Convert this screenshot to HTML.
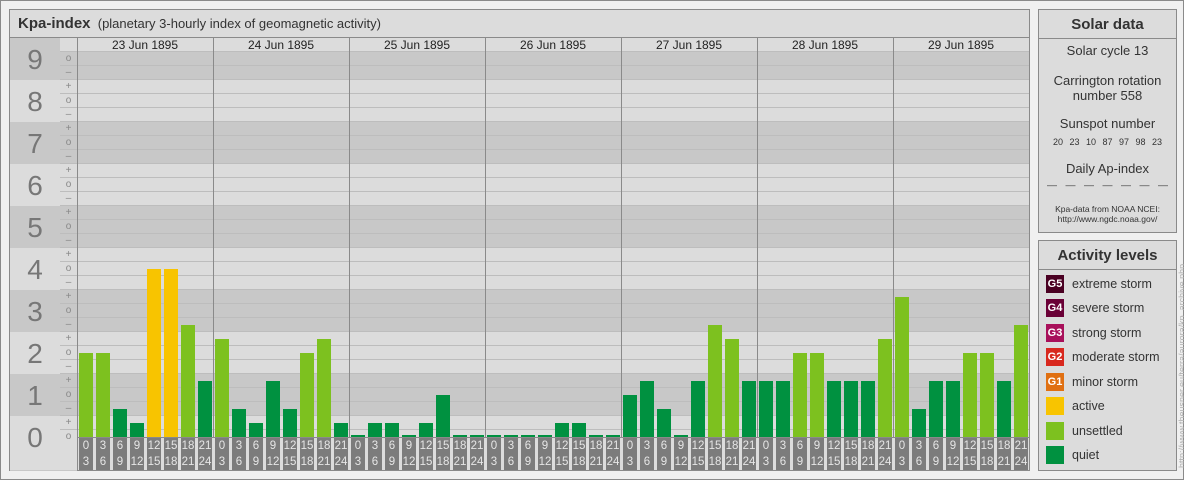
<!DOCTYPE html><html><head><meta charset="utf-8"><style>
*{margin:0;padding:0;box-sizing:border-box}
body{width:1184px;height:480px;background:#f0f0f0;font-family:"Liberation Sans",sans-serif;position:relative;overflow:hidden}
.a{position:absolute}
#frame{left:0;top:0;width:1184px;height:480px;border:1px solid #8a8a8a}
#main{left:9px;top:9px;width:1021px;height:462px;border:1px solid #8a8a8a;background:#dcdcdc}
#title{left:9px;top:9px;width:1021px;height:29px;border:1px solid #8a8a8a;background:#dcdcdc;font-size:13px;color:#333;padding:5px 0 0 8px}
#title b{font-size:15px;color:#333}
#dig{left:9px;top:38px;width:52px;height:433px;border-left:1px solid #8a8a8a;border-right:1px solid #8a8a8a;background:repeating-linear-gradient(#c8c8c8 0 42px,#dcdcdc 42px 84px)}
#dig div{position:absolute;left:0;width:50px;text-align:center;font-size:28px;color:#777;height:42px;line-height:44px}
#sub{left:60px;top:38px;width:18px;height:433px;border-right:1px solid #8a8a8a;background:repeating-linear-gradient(transparent 0 13px,#bdbdbd 13px 14px),repeating-linear-gradient(#c8c8c8 0 42px,#dcdcdc 42px 84px)}
#sub div{position:absolute;left:0;width:17px;text-align:center;font-size:10px;color:#888;height:14px;line-height:13px}
#chart{left:77px;top:38px;width:952px;height:400px;border-bottom:1px solid #8a8a8a;background:repeating-linear-gradient(transparent 0 13px,#bdbdbd 13px 14px),repeating-linear-gradient(#c8c8c8 0 42px,#dcdcdc 42px 84px)}
.hd{position:absolute;top:0;height:14px;width:136px;background:#dcdcdc;text-align:center;font-size:12px;line-height:14px;color:#222;border-bottom:1px solid #bdbdbd}
.dv{position:absolute;top:0;width:1px;height:400px;background:#8a8a8a}
#chart i{position:absolute;bottom:0;width:14px;background:#009140}
#chart i.u{background:#7dc11f}#chart i.y{background:#f8c400}
#lab div{position:absolute;top:0;width:14px;height:32px;background:#7c7c7c;color:#e6e6e6;font-size:11.5px;line-height:16px;text-align:center}
.box{border:1px solid #8a8a8a;background:#dcdcdc}
.bt{border-bottom:1px solid #8a8a8a;text-align:center;font-weight:bold;font-size:15px;color:#333;height:29px;line-height:29px}
.t{position:absolute;left:0;width:137px;text-align:center;font-size:13px;color:#333}
.sq{position:absolute;left:7px;width:18px;height:18px;color:#fff;font-size:11px;font-weight:bold;line-height:18px;text-align:center}
.lt{position:absolute;left:33px;font-size:12.5px;color:#333;line-height:18px}
</style></head><body>
<div class="a" id="frame"></div>
<div class="a" id="main"></div>
<div class="a" id="title"><b>Kpa-index</b>&nbsp; (planetary 3-hourly index of geomagnetic activity)</div>
<div class="a" id="dig">
<div style="top:378px;height:54px;background:#dcdcdc"></div>
<div style="top:0">9</div><div style="top:42px">8</div><div style="top:84px">7</div><div style="top:126px">6</div><div style="top:168px">5</div><div style="top:210px">4</div><div style="top:252px">3</div><div style="top:294px">2</div><div style="top:336px">1</div><div style="top:378px">0</div>
</div>
<div class="a" id="sub">
<div style="top:0;height:13px;background:#dcdcdc"></div>
<div style="top:392px;height:40px;background:#dcdcdc"></div>
<div style="top:14px">o</div><div style="top:28px">–</div>
<div style="top:42px">+</div><div style="top:56px">o</div><div style="top:70px">–</div>
<div style="top:84px">+</div><div style="top:98px">o</div><div style="top:112px">–</div>
<div style="top:126px">+</div><div style="top:140px">o</div><div style="top:154px">–</div>
<div style="top:168px">+</div><div style="top:182px">o</div><div style="top:196px">–</div>
<div style="top:210px">+</div><div style="top:224px">o</div><div style="top:238px">–</div>
<div style="top:252px">+</div><div style="top:266px">o</div><div style="top:280px">–</div>
<div style="top:294px">+</div><div style="top:308px">o</div><div style="top:322px">–</div>
<div style="top:336px">+</div><div style="top:350px">o</div><div style="top:364px">–</div>
<div style="top:378px">+</div><div style="top:392px">o</div>
</div>
<div class="a" id="chart">
<div class="hd" style="left:0">23 Jun 1895</div><div class="hd" style="left:136px">24 Jun 1895</div><div class="hd" style="left:272px">25 Jun 1895</div><div class="hd" style="left:408px">26 Jun 1895</div><div class="hd" style="left:544px">27 Jun 1895</div><div class="hd" style="left:680px">28 Jun 1895</div><div class="hd" style="left:816px">29 Jun 1895</div>
<div class="dv" style="left:0"></div><div class="dv" style="left:136px"></div><div class="dv" style="left:272px"></div><div class="dv" style="left:408px"></div><div class="dv" style="left:544px"></div><div class="dv" style="left:680px"></div><div class="dv" style="left:816px"></div>
<i class="u" style="left:2px;height:84px"></i><i class="u" style="left:19px;height:84px"></i><i style="left:36px;height:28px"></i><i style="left:53px;height:14px"></i><i class="y" style="left:70px;height:168px"></i><i class="y" style="left:87px;height:168px"></i><i class="u" style="left:104px;height:112px"></i><i style="left:121px;height:56px"></i>
<i class="u" style="left:138px;height:98px"></i><i style="left:155px;height:28px"></i><i style="left:172px;height:14px"></i><i style="left:189px;height:56px"></i><i style="left:206px;height:28px"></i><i class="u" style="left:223px;height:84px"></i><i class="u" style="left:240px;height:98px"></i><i style="left:257px;height:14px"></i>
<i style="left:274px;height:2px"></i><i style="left:291px;height:14px"></i><i style="left:308px;height:14px"></i><i style="left:325px;height:2px"></i><i style="left:342px;height:14px"></i><i style="left:359px;height:42px"></i><i style="left:376px;height:2px"></i><i style="left:393px;height:2px"></i>
<i style="left:410px;height:2px"></i><i style="left:427px;height:2px"></i><i style="left:444px;height:2px"></i><i style="left:461px;height:2px"></i><i style="left:478px;height:14px"></i><i style="left:495px;height:14px"></i><i style="left:512px;height:2px"></i><i style="left:529px;height:2px"></i>
<i style="left:546px;height:42px"></i><i style="left:563px;height:56px"></i><i style="left:580px;height:28px"></i><i style="left:597px;height:2px"></i><i style="left:614px;height:56px"></i><i class="u" style="left:631px;height:112px"></i><i class="u" style="left:648px;height:98px"></i><i style="left:665px;height:56px"></i>
<i style="left:682px;height:56px"></i><i style="left:699px;height:56px"></i><i class="u" style="left:716px;height:84px"></i><i class="u" style="left:733px;height:84px"></i><i style="left:750px;height:56px"></i><i style="left:767px;height:56px"></i><i style="left:784px;height:56px"></i><i class="u" style="left:801px;height:98px"></i>
<i class="u" style="left:818px;height:140px"></i><i style="left:835px;height:28px"></i><i style="left:852px;height:56px"></i><i style="left:869px;height:56px"></i><i class="u" style="left:886px;height:84px"></i><i class="u" style="left:903px;height:84px"></i><i style="left:920px;height:56px"></i><i class="u" style="left:937px;height:112px"></i>
</div>
<div class="a" style="left:77px;top:437px;width:1px;height:33px;background:#8a8a8a"></div>
<div class="a" id="lab" style="left:77px;top:438px;width:952px;height:32px">
<div style="left:2px">0<br>3</div><div style="left:19px">3<br>6</div><div style="left:36px">6<br>9</div><div style="left:53px">9<br>12</div><div style="left:70px">12<br>15</div><div style="left:87px">15<br>18</div><div style="left:104px">18<br>21</div><div style="left:121px">21<br>24</div>
<div style="left:138px">0<br>3</div><div style="left:155px">3<br>6</div><div style="left:172px">6<br>9</div><div style="left:189px">9<br>12</div><div style="left:206px">12<br>15</div><div style="left:223px">15<br>18</div><div style="left:240px">18<br>21</div><div style="left:257px">21<br>24</div>
<div style="left:274px">0<br>3</div><div style="left:291px">3<br>6</div><div style="left:308px">6<br>9</div><div style="left:325px">9<br>12</div><div style="left:342px">12<br>15</div><div style="left:359px">15<br>18</div><div style="left:376px">18<br>21</div><div style="left:393px">21<br>24</div>
<div style="left:410px">0<br>3</div><div style="left:427px">3<br>6</div><div style="left:444px">6<br>9</div><div style="left:461px">9<br>12</div><div style="left:478px">12<br>15</div><div style="left:495px">15<br>18</div><div style="left:512px">18<br>21</div><div style="left:529px">21<br>24</div>
<div style="left:546px">0<br>3</div><div style="left:563px">3<br>6</div><div style="left:580px">6<br>9</div><div style="left:597px">9<br>12</div><div style="left:614px">12<br>15</div><div style="left:631px">15<br>18</div><div style="left:648px">18<br>21</div><div style="left:665px">21<br>24</div>
<div style="left:682px">0<br>3</div><div style="left:699px">3<br>6</div><div style="left:716px">6<br>9</div><div style="left:733px">9<br>12</div><div style="left:750px">12<br>15</div><div style="left:767px">15<br>18</div><div style="left:784px">18<br>21</div><div style="left:801px">21<br>24</div>
<div style="left:818px">0<br>3</div><div style="left:835px">3<br>6</div><div style="left:852px">6<br>9</div><div style="left:869px">9<br>12</div><div style="left:886px">12<br>15</div><div style="left:903px">15<br>18</div><div style="left:920px">18<br>21</div><div style="left:937px">21<br>24</div>
</div>

<div class="a box" style="left:1038px;top:9px;width:139px;height:224px">
<div class="bt">Solar data</div>
<div class="t" style="top:33px">Solar cycle 13</div>
<div class="t" style="top:63px;line-height:15px">Carrington rotation<br>number 558</div>
<div class="t" style="top:106px">Sunspot number</div>
<div class="t" style="top:127px;font-size:9px;word-spacing:4px">20 23 10 87 97 98 23</div>
<div class="t" style="top:151px">Daily Ap-index</div>
<div class="t" style="top:170px;font-size:9px;word-spacing:6px">–– –– –– –– –– –– ––</div>
<div class="t" style="top:194px;font-size:8.5px;line-height:10px">Kpa-data from NOAA NCEI:<br>http://www.ngdc.noaa.gov/</div>
</div>

<div class="a box" style="left:1038px;top:240px;width:139px;height:231px">
<div class="bt">Activity levels</div>
<div class="sq" style="top:34px;background:#4a0022">G5</div><div class="lt" style="top:34px">extreme storm</div>
<div class="sq" style="top:58px;background:#6a0036">G4</div><div class="lt" style="top:58px">severe storm</div>
<div class="sq" style="top:83px;background:#a8105a">G3</div><div class="lt" style="top:83px">strong storm</div>
<div class="sq" style="top:107px;background:#d8281e">G2</div><div class="lt" style="top:107px">moderate storm</div>
<div class="sq" style="top:132px;background:#e07012">G1</div><div class="lt" style="top:132px">minor storm</div>
<div class="sq" style="top:156px;background:#f8c400"></div><div class="lt" style="top:156px">active</div>
<div class="sq" style="top:181px;background:#7dc11f"></div><div class="lt" style="top:181px">unsettled</div>
<div class="sq" style="top:205px;background:#009140"></div><div class="lt" style="top:205px">quiet</div>
</div>
<div class="a" style="left:1178px;top:468px;transform-origin:0 0;transform:rotate(-90deg);font-size:9px;color:#b0b0b0;white-space:nowrap;line-height:9px">http://www.theusner.eu/terra/aurora/kp_archive.php</div>
</body></html>
